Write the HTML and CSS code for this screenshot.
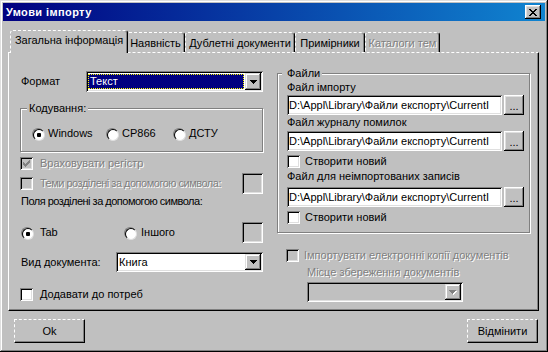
FILE: index.html
```html
<!DOCTYPE html>
<html lang="uk">
<head>
    <meta charset="UTF-8">
    <title>Умови імпорту</title>
    <link rel="stylesheet" href="styles.css">
</head>
<body>
<div class="window">
    <div class="titlebar">
        <span class="title">Умови імпорту</span>
        <span class="close-btn">
            <svg width="8" height="7" viewBox="0 0 8 7"><path d="M0 0h2v1h-2z M6 0h2v1h-2z M1 1h2v1h-2z M5 1h2v1h-2z M2 2h4v1h-4z M3 3h2v1h-2z M2 4h4v1h-4z M1 5h2v1h-2z M5 5h2v1h-2z M0 6h2v1h-2z M6 6h2v1h-2z" fill="#000"/></svg>
        </span>
    </div>

    <div class="dialog">
        <div class="tabs">
            <div class="tab active t1">Загальна інформація</div>
            <div class="tab t2">Наявність</div>
            <div class="tab t3">Дублетні документи</div>
            <div class="tab t4">Примірники</div>
            <div class="tab t5 disabled">Каталоги тем</div>
        </div>

        <div class="panel">
            <!-- left column -->
            <div class="col-left">
                <div class="row row-format">
                    <span class="lbl-format">Формат</span>
                    <div class="combo combo-format">
                        <div class="combo-value focused">Текст</div>
                        <div class="combo-arrow">
                            <svg width="7" height="4" viewBox="0 0 7 4"><path d="M0 0H7V1H6V2H5V3H4V4H3V3H2V2H1V1H0Z" fill="#000"/></svg>
                        </div>
                    </div>
                </div>

                <div class="group group-coding">
                    <div class="legend">Кодування:</div>
                    <div class="radio-row">
                        <label class="radio-item w-windows"><span class="radio checked"></span>Windows</label>
                        <label class="radio-item w-cp"><span class="radio"></span>CP866</label>
                        <label class="radio-item"><span class="radio"></span>ДСТУ</label>
                    </div>
                </div>

                <div class="check-row disabled mt-case">
                    <span class="checkbox">
                        <svg width="7" height="7" viewBox="0 0 7 7"><path d="M6 0h1v1h-1z M5 1h2v1h-2z M0 2h1v1h-1z M4 2h3v1h-3z M0 3h2v1h-2z M3 3h3v1h-3z M0 4h5v1h-5z M1 5h3v1h-3z M2 6h1v1h-1z" fill="#808080"/></svg>
                    </span>
                    Враховувати регістр
                </div>

                <div class="check-row disabled row-themes">
                    <span class="checkbox"></span>
                    <span class="grow tight">Теми розділені за допомогою символа:</span>
                    <span class="char-box"></span>
                </div>

                <div class="caption tight">Поля розділені за допомогою символа:</div>

                <div class="row row-fields">
                    <label class="radio-item w-tab"><span class="radio checked"></span>Tab</label>
                    <label class="radio-item grow"><span class="radio"></span>Іншого</label>
                    <span class="char-box"></span>
                </div>

                <div class="row row-kind">
                    <span class="lbl-kind">Вид документа:</span>
                    <div class="combo combo-kind">
                        <div class="combo-value">Книга</div>
                        <div class="combo-arrow">
                            <svg width="7" height="4" viewBox="0 0 7 4"><path d="M0 0H7V1H6V2H5V3H4V4H3V3H2V2H1V1H0Z" fill="#000"/></svg>
                        </div>
                    </div>
                </div>

                <div class="check-row mt-add">
                    <span class="checkbox white"></span>
                    Додавати до потреб
                </div>
            </div>

            <!-- right column -->
            <div class="col-right">
                <div class="group group-files">
                    <div class="legend">Файли</div>

                    <div class="file-label">Файл імпорту</div>
                    <div class="file-row mt1">
                        <div class="field">D:\Appl\Library\Файли експорту\CurrentI</div>
                        <div class="btn-browse">...</div>
                    </div>

                    <div class="file-label mt1">Файл журналу помилок</div>
                    <div class="file-row mt2">
                        <div class="field">D:\Appl\Library\Файли експорту\CurrentI</div>
                        <div class="btn-browse">...</div>
                    </div>
                    <div class="check-row mt4 gap5">
                        <span class="checkbox white"></span>
                        Створити новий
                    </div>

                    <div class="file-label mt2">Файл для неімпортованих записів</div>
                    <div class="file-row mt4">
                        <div class="field">D:\Appl\Library\Файли експорту\CurrentI</div>
                        <div class="btn-browse">...</div>
                    </div>
                    <div class="check-row mt4 gap5">
                        <span class="checkbox white"></span>
                        Створити новий
                    </div>
                </div>

                <div class="check-row disabled gap5 row-import">
                    <span class="checkbox"></span>
                    Імпортувати електронні копії документів
                </div>
                <div class="caption-place disabled">Місце збереження документів</div>
                <div class="combo combo-place">
                    <div class="combo-value"></div>
                    <div class="combo-arrow">
                        <svg width="8" height="5" viewBox="0 0 8 5"><path d="M1 1H8V2H7V3H6V4H5V5H4V4H3V3H2V2H1Z" fill="#fff"/><path d="M0 0H7V1H6V2H5V3H4V4H3V3H2V2H1V1H0Z" fill="#808080"/></svg>
                    </div>
                </div>
            </div>
        </div>

        <div class="buttons">
            <div class="btn">Ok</div>
            <div class="btn">Відмінити</div>
        </div>
    </div>
</div>
</body>
</html>
```

FILE: styles.css
```css
* {
    box-sizing: border-box;
}
body {
    margin: 0;
    font-family: "Liberation Sans", Arial, sans-serif;
    font-size: 11px;
    line-height: 13px;
    color: #000;
    background: #c0c0c0;
}
.window {
    width: 548px;
    height: 352px;
    padding: 3px;
    background: #c0c0c0;
    box-shadow: inset -1px -1px #000, inset 1px 1px #dfdfdf, inset -2px -2px #808080, inset 2px 2px #fff;
}
.titlebar {
    height: 18px;
    display: flex;
    align-items: center;
    justify-content: space-between;
    padding: 0 4px 0 3px;
    background: linear-gradient(to right, #000080, #1084d0);
}
.title {
    color: #fff;
    font-weight: bold;
    font-size: 11px;
    letter-spacing: 0.4px;
}
.close-btn {
    width: 16px;
    height: 14px;
    display: flex;
    align-items: center;
    justify-content: center;
    background: #c0c0c0;
    box-shadow: inset -1px -1px #000, inset 1px 1px #fff, inset -2px -2px #808080, inset 2px 2px #dfdfdf;
}
.dialog {
    padding: 9px 6px 0 5px;
}

/* tabs */
.tabs {
    display: flex;
    align-items: flex-end;
    height: 22px;
    padding-left: 4px;
}
.tab {
    height: 20px;
    padding-top: 4px;
    text-align: center;
    white-space: nowrap;
    background: #c0c0c0;
    border-top: 1px dashed #fff;
    border-left: 1px dashed #fff;
    border-right: 1px solid #000;
    border-radius: 3px 3px 0 0;
    box-shadow: inset -1px 0 #808080;
}
.tab.active {
    position: relative;
    z-index: 1;
    height: 23px;
    padding-top: 3px;
    margin: 0 -2px -1px;
}
.t1 { width: 118px; }
.t2 { width: 59px; }
.t3 { width: 110px; }
.t4 { width: 70px; }
.t5 { width: 75px; }
.disabled {
    color: #808080;
    text-shadow: 1px 1px #fff;
}
.tight {
    letter-spacing: -0.5px;
}

/* panel */
.panel {
    height: 259px;
    display: grid;
    grid-template-columns: 243px 254px;
    column-gap: 14px;
    align-items: start;
    padding-left: 11px;
    border-top: 1px dashed #fff;
    border-left: 1px solid #fff;
    border-right: 1px solid #000;
    border-bottom: 1px solid #000;
    box-shadow: inset -1px -1px #808080;
}
.col-left {
    padding-top: 18px;
    display: flex;
    flex-direction: column;
}
.col-right {
    padding-top: 20px;
    display: flex;
    flex-direction: column;
}
.row {
    display: flex;
    align-items: center;
}
.grow {
    flex: 1;
    min-width: 0;
}
.row-format {
    height: 21px;
}
.lbl-format {
    width: 66px;
    padding-left: 1px;
}

/* group boxes */
.group {
    border: 1px solid #808080;
    box-shadow: inset 1px 1px #fff, 1px 1px #fff;
}
.legend {
    width: fit-content;
    margin-top: -7px;
    background: #c0c0c0;
}
.group-coding {
    margin-top: 16px;
    height: 44px;
}
.group-coding .legend {
    margin-left: 6px;
    padding: 0 2px;
}
.radio-row {
    display: flex;
    align-items: center;
    height: 13px;
    margin-top: 12px;
    padding-left: 11px;
}
.radio-item {
    display: flex;
    align-items: center;
    gap: 4px;
    white-space: nowrap;
}
.w-windows { width: 74px; }
.w-cp { width: 67px; }
.w-tab {
    width: 104px;
    padding-left: 1px;
    gap: 7px;
}
.row-fields .grow {
    gap: 5px;
}
.radio {
    width: 12px;
    height: 12px;
    flex: none;
    border-radius: 50%;
    border: 1px solid;
    border-color: #808080 #fff #fff #808080;
}
.radio::before {
    content: "";
    display: block;
    width: 10px;
    height: 10px;
    border-radius: 50%;
    border: 1px solid;
    border-color: #000 #dfdfdf #dfdfdf #000;
    background: #fff;
}
.radio.checked::before {
    background: radial-gradient(circle at center, #000 0 2px, #fff 2.5px);
}

/* checkboxes */
.check-row {
    display: flex;
    align-items: center;
    gap: 7px;
    min-height: 13px;
    white-space: nowrap;
}
.gap5 {
    gap: 5px;
}
.checkbox {
    width: 13px;
    height: 13px;
    flex: none;
    display: flex;
    align-items: center;
    justify-content: center;
    background: #c0c0c0;
    box-shadow: inset 1px 1px #808080, inset -1px -1px #fff, inset 2px 2px #000, inset -2px -2px #dfdfdf;
}
.checkbox.white {
    background: #fff;
}
.mt-case {
    margin-top: 5px;
}
.row-themes {
    height: 21px;
    margin-top: 3px;
}
.char-box {
    width: 21px;
    height: 21px;
    flex: none;
    background: #c0c0c0;
    box-shadow: inset 1px 1px #808080, inset -1px -1px #fff, inset 2px 2px #000, inset -2px -2px #dfdfdf;
}
.caption {
    margin-top: 1px;
    padding-left: 1px;
}
.row-fields {
    height: 21px;
    margin-top: 14px;
}
.row-kind {
    height: 20px;
    margin-top: 9px;
}
.lbl-kind {
    width: 96px;
    padding-left: 1px;
}
.mt-add {
    margin-top: 16px;
}

/* combos */
.combo {
    display: flex;
    padding: 2px;
    background: #fff;
    box-shadow: inset 1px 1px #808080, inset -1px -1px #fff, inset 2px 2px #000, inset -2px -2px #dfdfdf;
}
.combo-format {
    width: 177px;
    height: 21px;
}
.combo-kind {
    width: 147px;
    height: 20px;
}
.combo-value {
    flex: 1;
    padding-left: 1px;
    line-height: 16px;
    white-space: nowrap;
}
.combo-value.focused {
    margin: 1px 1px 1px 0;
    padding-left: 1px;
    line-height: 13px;
    background: #000080;
    color: #fff;
    border: 1px dotted #ffff00;
}
.combo-arrow {
    width: 16px;
    flex: none;
    display: flex;
    align-items: center;
    justify-content: center;
    background: #c0c0c0;
    box-shadow: inset -1px -1px #000, inset 1px 1px #dfdfdf, inset -2px -2px #808080, inset 2px 2px #fff;
}

/* files group */
.group-files {
    height: 160px;
    width: 253px;
    padding: 0 5px 0 9px;
}
.group-files .legend {
    margin-left: -5px;
    padding: 0 2px 0 5px;
}
.file-label {
    margin-top: 1px;
}
.file-row {
    display: flex;
    gap: 2px;
    height: 20px;
}
.field {
    width: 216px;
    padding: 0 2px;
    line-height: 20px;
    white-space: nowrap;
    overflow: hidden;
    background: #fff;
    box-shadow: inset 1px 1px #808080, inset -1px -1px #fff, inset 2px 2px #000, inset -2px -2px #dfdfdf;
}
.btn-browse {
    width: 20px;
    text-align: center;
    line-height: 22px;
    background: #c0c0c0;
    box-shadow: inset -1px -1px #000, inset 1px 1px #fff, inset -2px -2px #808080, inset 2px 2px #dfdfdf;
}
.mt1 { margin-top: 1px; }
.mt2 { margin-top: 2px; }
.mt4 { margin-top: 4px; }

.row-import {
    margin-top: 16px;
    padding-left: 9px;
}
.caption-place {
    margin-top: 4px;
    padding-left: 30px;
}
.combo-place {
    width: 156px;
    height: 20px;
    margin: 3px 0 0 30px;
    background: #c0c0c0;
}

/* bottom buttons */
.buttons {
    display: flex;
    justify-content: space-between;
    margin-top: 8px;
    padding: 0 1px 0 6px;
}
.btn {
    width: 71px;
    height: 24px;
    line-height: 22px;
    text-align: center;
    border-top: 1px dashed #fff;
    border-left: 1px dashed #fff;
    border-right: 1px solid #000;
    border-bottom: 1px solid #000;
    box-shadow: inset -1px -1px #808080;
}
```
